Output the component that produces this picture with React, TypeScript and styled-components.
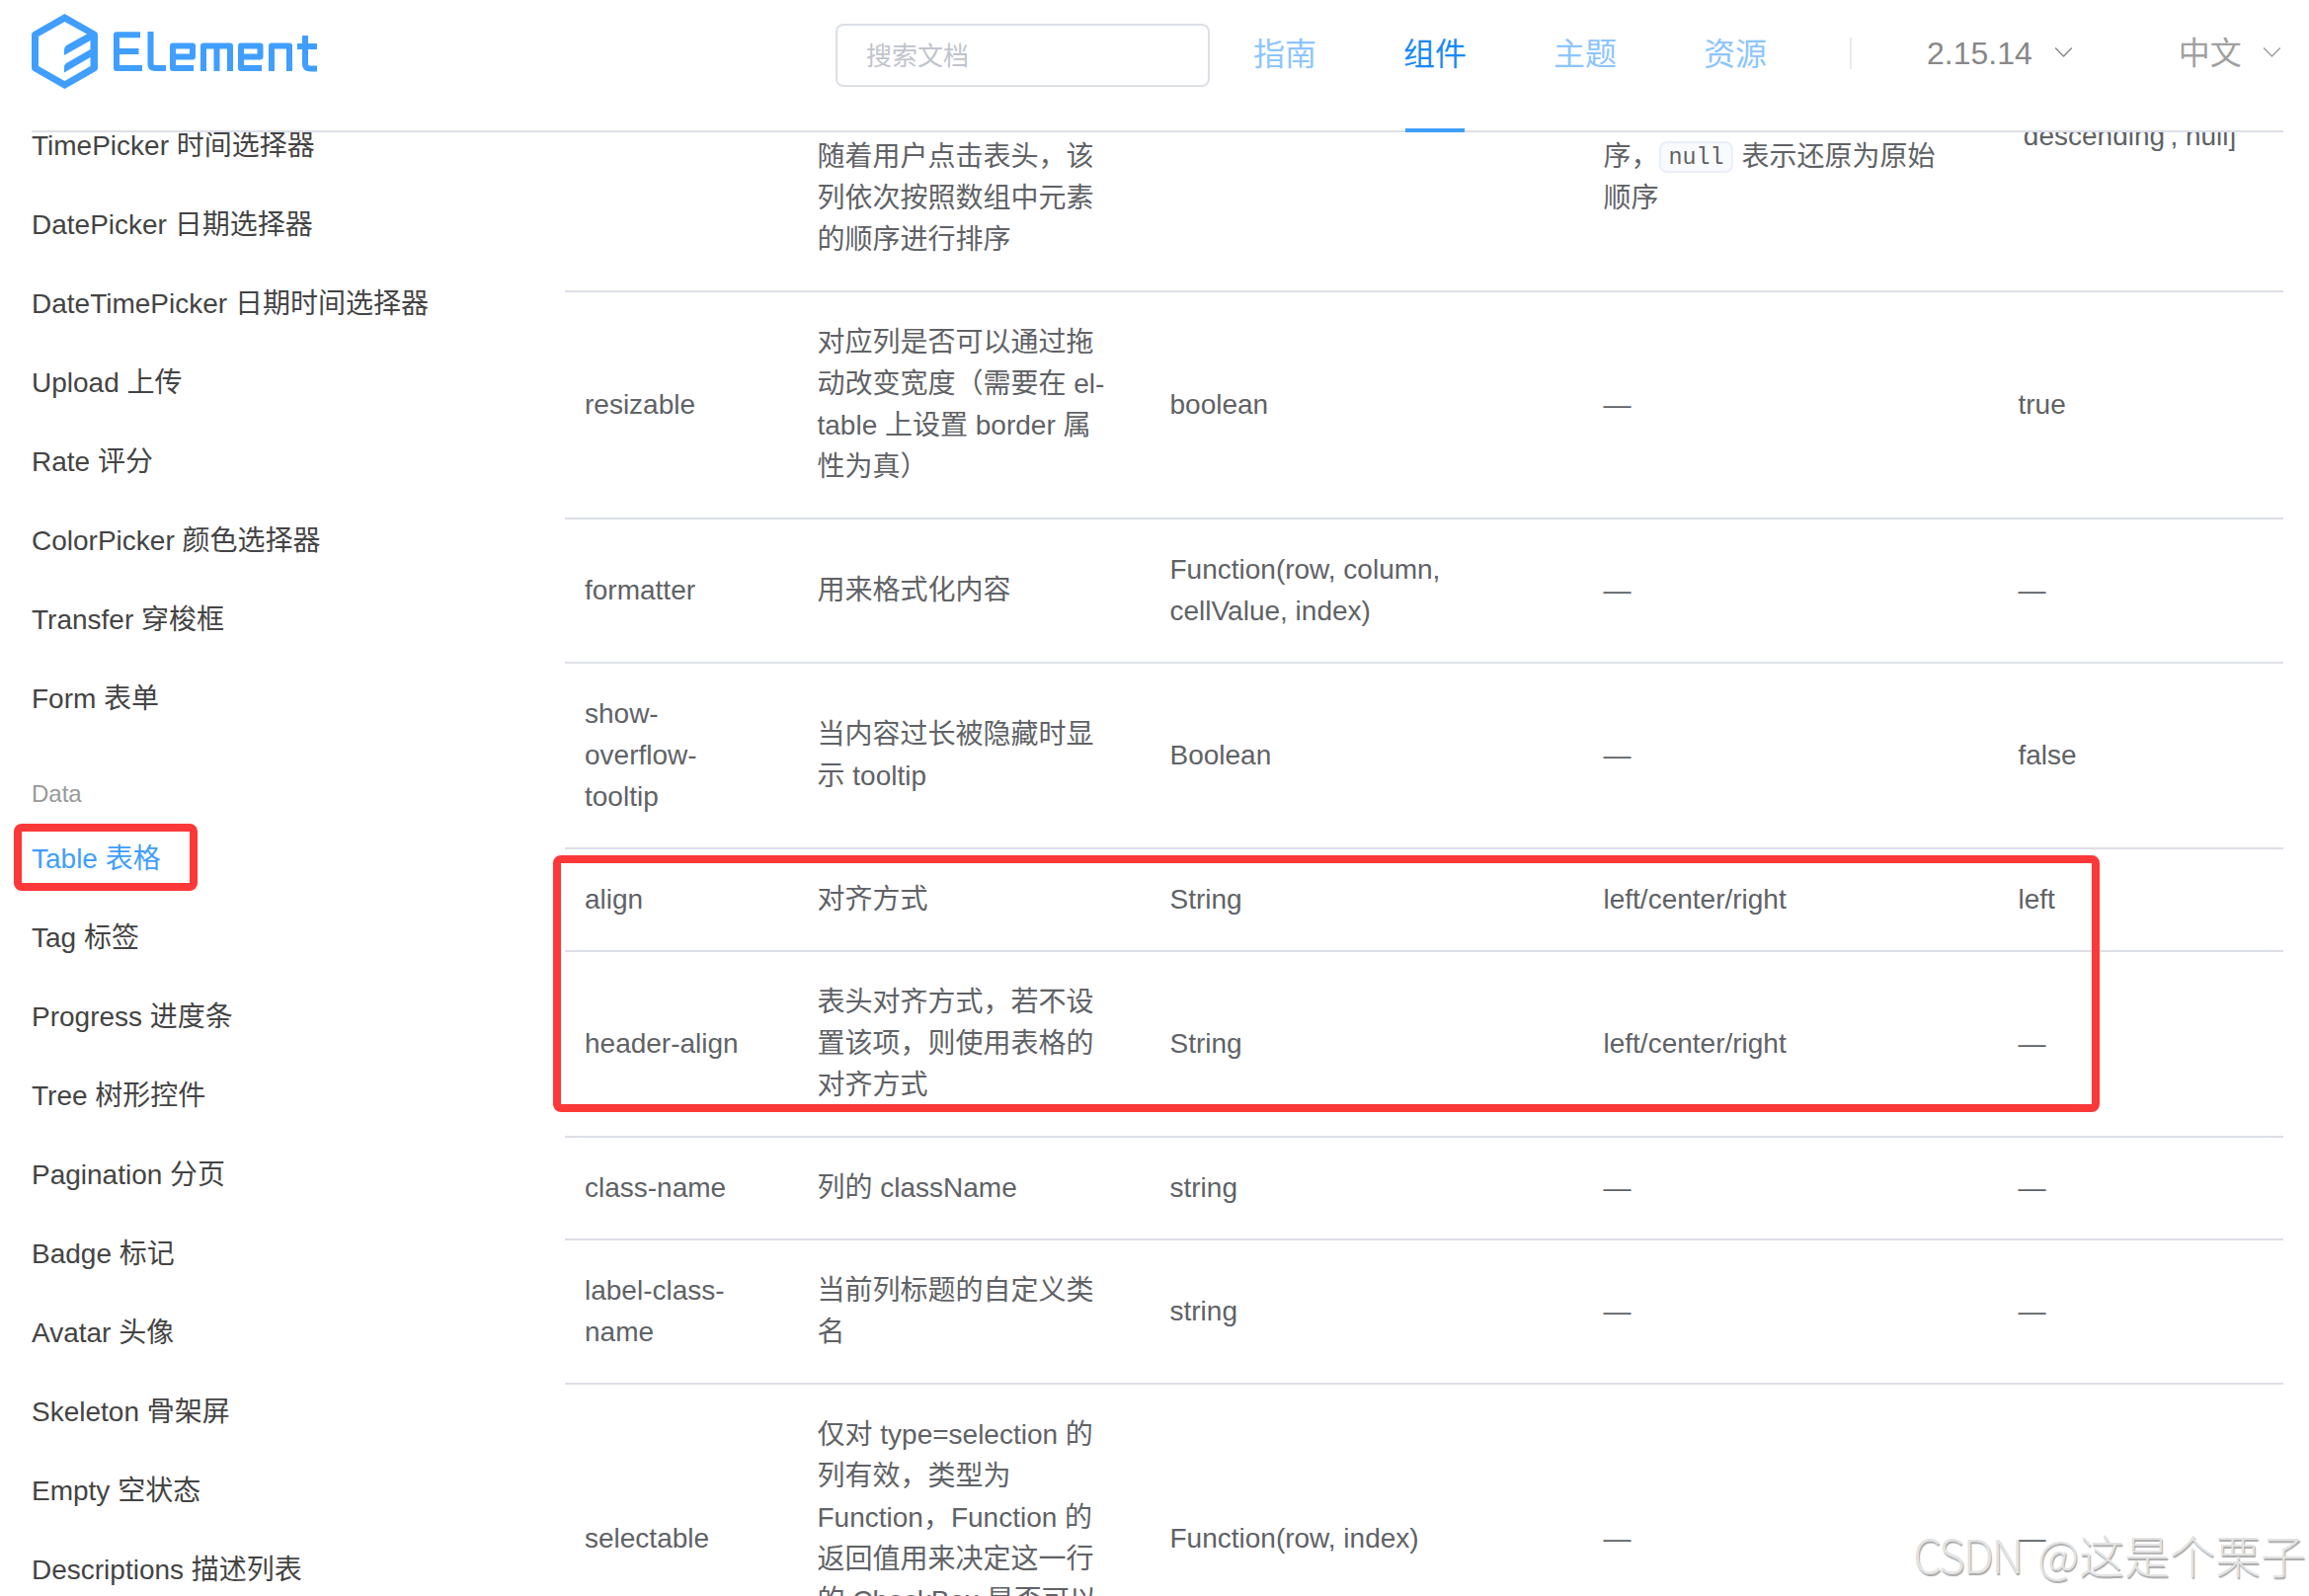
import React from 'react';
import styled, { createGlobalStyle } from 'styled-components';

const GlobalStyle = createGlobalStyle`
  * { box-sizing: border-box; }
  body {
    margin: 0;
    background: #fff;
    font-family: "Liberation Sans", "Noto Sans CJK SC", sans-serif;
    overflow: hidden;
  }
`;

const Page = styled.div`
  position: relative;
  width: 2338px;
  height: 1616px;
  overflow: hidden;
  display: flex;
  flex-direction: column;
  background: #fff;
`;

const Header = styled.header`
  flex: none;
  display: flex;
  height: 134px;
  margin: 0 26px 0 32px;
  border-bottom: 2px solid #dcdfe6;
`;

const Logo = styled.svg`
  display: block;
  flex: none;
  width: 292px;
  height: 78px;
  margin-top: 13px;
`;

const SearchBox = styled.input`
  flex: none;
  width: 379px;
  height: 64px;
  margin: 24px 44px 0 522px;
  padding: 2px 28px 0 29px;
  border: 2px solid #dcdfe6;
  border-radius: 8px;
  font: 26px "Liberation Sans", "Noto Sans CJK SC", sans-serif;
  outline: none;
  &::placeholder { color: #c0c4cc; opacity: 1; }
`;

const Nav = styled.nav`
  display: flex;
  height: 134px;
  gap: 88px;
`;

const NavItem = styled.a<{ $active?: boolean }>`
  position: relative;
  width: 64px;
  line-height: 110px;
  font-size: 32px;
  white-space: nowrap;
  color: ${(p) => (p.$active ? '#1989fa' : '#8cc5ff')};
  &::after {
    content: "";
    display: ${(p) => (p.$active ? 'block' : 'none')};
    position: absolute;
    left: 2px;
    bottom: 0;
    width: 60px;
    height: 4px;
    background: #409eff;
  }
`;

const Divider = styled.i`
  width: 2px;
  height: 32px;
  margin: 38px 76px 0 84px;
  background: #ebebeb;
`;

const Dropdown = styled.div<{ $light?: boolean; $gap: number }>`
  display: flex;
  align-items: center;
  flex: none;
  height: 108px;
  gap: ${(p) => p.$gap}px;
  margin-right: ${(p) => (p.$light ? 0 : 106)}px;
  font-size: 32px;
  line-height: 36px;
  color: ${(p) => (p.$light ? '#a0a0a0' : '#888')};
  svg { margin-top: -3px; }
`;

const Body = styled.div`
  flex: 1;
  min-height: 0;
  display: flex;
  overflow: hidden;
`;

const Sidebar = styled.aside`
  flex: none;
  width: 572px;
  margin-top: -26px;
  padding-left: 32px;
`;

const SideItem = styled.a<{ $active?: boolean }>`
  display: block;
  height: 80px;
  line-height: 80px;
  font-size: 28px;
  color: ${(p) => (p.$active ? '#409eff' : '#444')};
`;

const SideTitle = styled.div`
  margin-top: 30px;
  height: 52px;
  line-height: 52px;
  font-size: 24px;
  color: #999;
`;

const Table = styled.main`
  flex: none;
  width: 1740px;
  margin-top: -28px;
`;

const Row = styled.div<{ $clipped?: boolean }>`
  display: grid;
  grid-template-columns: 226px 357px 439px 420px 298px;
  align-items: ${(p) => (p.$clipped ? 'end' : 'center')};
  height: ${(p) => (p.$clipped ? '190px' : 'auto')};
  grid-template-rows: ${(p) => (p.$clipped ? '128px' : 'auto')};
  padding: 30px 0;
  border-bottom: 2px solid #dcdfe6;
`;

const Cell = styled.div<{ $first?: boolean; $below?: number }>`
  padding-left: ${(p) => (p.$first ? 20 : 29.5)}px;
  padding-bottom: ${(p) => p.$below ?? 0}px;
  font-size: 28px;
  line-height: 42px;
  color: #606266;
  white-space: pre;
`;

const Code = styled.code`
  display: inline-block;
  vertical-align: top;
  height: 32px;
  margin: 5px 8px 0 0;
  padding: 0 8px;
  border: 2px solid #eaeefb;
  border-radius: 8px;
  background: #f9fafc;
  font: 23.300px/30px "Liberation Mono", monospace;
`;

const Marker = styled.div<{ $x: number; $y: number; $w: number; $h: number }>`
  position: absolute;
  left: ${(p) => p.$x}px;
  top: ${(p) => p.$y}px;
  width: ${(p) => p.$w}px;
  height: ${(p) => p.$h}px;
  border: 8px solid #fc3838;
  border-radius: 8px;
`;

const Watermark = styled.div`
  position: absolute;
  right: 3px;
  bottom: 9px;
  display: flex;
  gap: 16px;
  line-height: 68px;
  font-family: "Noto Sans CJK SC", sans-serif;
  font-size: 46px;
  font-weight: 300;
  white-space: nowrap;
  color: #e3e3e3;
  text-shadow: 1px 2px 1px #a8a8a8;
`;

const Tight = styled.span`
  letter-spacing: -2px;
`;

const Chevron = () => (
  <svg width="20" height="14" viewBox="0 0 20 14" fill="none" stroke="currentColor" strokeWidth="1.5">
    <path d="M1.2 2.500 L9.500 11 L17.800 2.500" />
  </svg>
);

const ElementLogo = () => (
  <Logo viewBox="32 13 292 78" fill="#409eff">
    <path
      fillRule="evenodd"
      d="M65.5 14 L97 32 Q99 33 99 35 V69 Q99 71 97 72 L65.5 90 L34 72 Q32 71 32 69 V35 Q32 33 34 32 Z M65.5 22 L39 37 V67 L65.5 82 L91.500 67 V58 L65 73.500 V68 Q65 65 68 63.500 L91.500 50 V41 L65 56 V51 Q65 47 68 45.500 L88 34.500 Z"
    />
    <g fill="none" stroke="#409eff" strokeWidth="6" strokeLinejoin="round">
      <path d="M142 35.300 H118 V69 H144 M120 52 H140.500" />
      <path d="M152.500 32 V65 Q152.500 69 157 69 H168" />
      <path d="M196 69 H175 V46.500 H195 V57.500 H177" />
      <path d="M206 72 V46.500 H233 V72 M219.500 46.500 V72" />
      <path d="M265 69 H244 V46.500 H263.500 V57.500 H246" />
      <path d="M275 72 V46.500 H293 V72" />
      <path d="M309 36 V65 Q309 69.500 315 69.500 H321 M301 47 H321" />
    </g>
  </Logo>
);

const before = ['TimePicker 时间选择器', 'DatePicker 日期选择器', 'DateTimePicker 日期时间选择器', 'Upload 上传', 'Rate 评分', 'ColorPicker 颜色选择器', 'Transfer 穿梭框', 'Form 表单'];
const data = ['Table 表格', 'Tag 标签', 'Progress 进度条', 'Tree 树形控件', 'Pagination 分页', 'Badge 标记', 'Avatar 头像', 'Skeleton 骨架屏', 'Empty 空状态', 'Descriptions 描述列表'];

const rows: string[][] = [
  ['resizable', '对应列是否可以通过拖\n动改变宽度（需要在 el-\ntable 上设置 border 属\n性为真）', 'boolean', '—', 'true'],
  ['formatter', '用来格式化内容', 'Function(row, column,\ncellValue, index)', '—', '—'],
  ['show-\noverflow-\ntooltip', '当内容过长被隐藏时显\n示 tooltip', 'Boolean', '—', 'false'],
  ['align', '对齐方式', 'String', 'left/center/right', 'left'],
  ['header-align', '表头对齐方式，若不设\n置该项，则使用表格的\n对齐方式', 'String', 'left/center/right', '—'],
  ['class-name', '列的 className', 'string', '—', '—'],
  ['label-class-\nname', '当前列标题的自定义类\n名', 'string', '—', '—'],
  ['selectable', '仅对 type=selection 的\n列有效，类型为\nFunction，Function 的\n返回值用来决定这一行\n的 CheckBox 是否可以\n勾选', 'Function(row, index)', '—', '—'],
];

export default function App() {
  return (
    <Page>
      <GlobalStyle />
      <Header>
        <ElementLogo />
        <SearchBox placeholder="搜索文档" />
        <Nav>
          <NavItem>指南</NavItem>
          <NavItem $active>组件</NavItem>
          <NavItem>主题</NavItem>
          <NavItem>资源</NavItem>
        </Nav>
        <Divider />
        <Dropdown $gap={22}>2.15.14<Chevron /></Dropdown>
        <Dropdown $light $gap={21}>中文<Chevron /></Dropdown>
      </Header>
      <Body>
        <Sidebar>
          {before.map((t) => <SideItem key={t}>{t}</SideItem>)}
          <SideTitle>Data</SideTitle>
          {data.map((t, i) => <SideItem key={t} $active={i === 0}>{t}</SideItem>)}
        </Sidebar>
        <Table>
          <Row $clipped>
            <Cell $first />
            <Cell>{'随着用户点击表头，该\n列依次按照数组中元素\n的顺序进行排序'}</Cell>
            <Cell />
            <Cell $below={42}>序，<Code>null</Code>{'表示还原为原始\n顺序'}</Cell>
            <Cell $below={105}>{"'descending', null]"}</Cell>
          </Row>
          {rows.map((r) => (
            <Row key={r[0]}>
              {r.map((c, i) => <Cell key={i} $first={i === 0}>{c}</Cell>)}
            </Row>
          ))}
        </Table>
      </Body>
      <Marker $x={14} $y={834} $w={186} $h={68} />
      <Marker $x={560} $y={866} $w={1566} $h={260} />
      <Watermark><Tight>CSDN</Tight><span>@这是个栗子</span></Watermark>
    </Page>
  );
}
